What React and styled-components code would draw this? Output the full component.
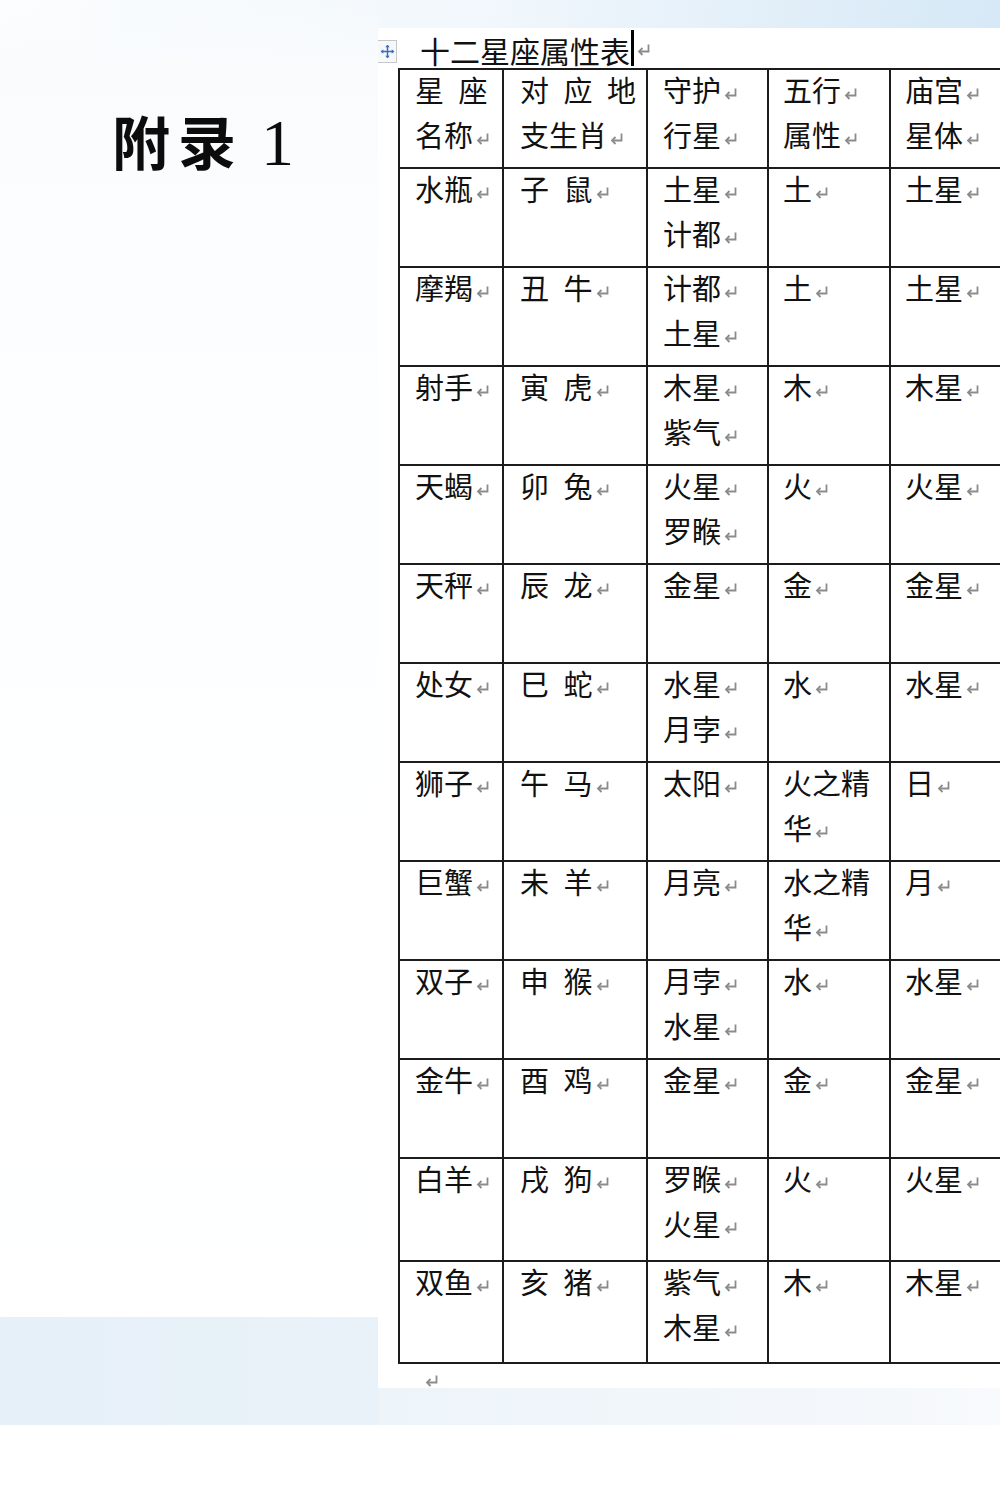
import styled, { createGlobalStyle } from 'styled-components';

const GlobalStyle = createGlobalStyle`
  body {
    margin: 0;
    background: #fff;
  }
`;

const Screen = styled.div`
  width: 1000px;
  height: 1506px;
  overflow: hidden;
  display: flex;
  flex-direction: column;
  background: #fff;
  font-family: 'Noto Sans CJK SC', 'Noto Sans', sans-serif;
  color: #111;
`;

const Stage = styled.div`
  display: flex;
  height: 1425px;
  flex-shrink: 0;
  background: linear-gradient(100deg, #fbfdfe 0%, #f1f7fc 40%, #d9eaf7 75%, #cfe4f6 100%);
`;

const Aside = styled.aside`
  width: 378px;
  flex-shrink: 0;
  display: flex;
  flex-direction: column;
`;

const AsideBody = styled.div`
  flex: 1;
  padding: 108px 0 0 112px;
  background: linear-gradient(180deg, rgba(255,255,255,0) 0px, #f9fbfd 60px, #fdfeff 400px, #ffffff 100%);
`;

const Heading = styled.h1`
  margin: 0;
  display: flex;
  align-items: baseline;
  font-weight: 700;
  font-size: 58px;
  line-height: 64px;
  letter-spacing: 8px;
  color: #0c0c0c;
`;

const HeadingNum = styled.span`
  font-family: 'Liberation Serif', serif;
  font-weight: 400;
  font-size: 66px;
  letter-spacing: 0;
  margin-left: 17px;
`;

const AsideBand = styled.div`
  height: 108px;
  background: linear-gradient(90deg, #e6f0f8, #e9f2f9);
`;

const Main = styled.main`
  flex: 1;
  min-width: 0;
  display: flex;
  flex-direction: column;
  padding-top: 28px;
`;

const Sheet = styled.div`
  position: relative;
  height: 1360px;
  background: #fff;
  overflow-x: clip;
  overflow-y: visible;
  padding-left: 20px;
`;

const MainBand = styled.div`
  flex: 1;
  background: linear-gradient(90deg, #edf4fa, #f3f7fb 70%, #f8fafc);
`;

const Handle = styled.div`
  position: absolute;
  left: 0;
  top: 12px;
  width: 18px;
  height: 21px;
  border: 1px solid #c4c8cc;
  border-left: none;
  background: #f6f8fa;
  display: flex;
  align-items: center;
  justify-content: center;
`;

const Caption = styled.div`
  height: 44px;
  line-height: 44px;
  margin-bottom: -4px;
  display: flex;
  align-items: center;
  padding-left: 22px;
  font-size: 30px;
  white-space: nowrap;
`;

const Cursor = styled.span`
  display: inline-block;
  width: 3px;
  height: 36px;
  background: #000;
  margin: 0 0 4px 1px;
`;

const Table = styled.table`
  position: relative;
  border-collapse: collapse;
  table-layout: fixed;
  width: 640px;
  font-size: 29px;
`;

const Row = styled.tr`
  height: ${({ $h }) => $h}px;
`;

const Cell = styled.td`
  border: 2px solid #1c1c1c;
  vertical-align: top;
  padding: 0 0 0 ${({ $pad }) => $pad}px;
`;

const Lines = styled.div`
  margin-top: -3px;
`;

const Line = styled.div`
  line-height: 45px;
  white-space: nowrap;
`;

const MarkSvg = styled.svg`
  display: inline-block;
  vertical-align: 1px;
  margin-left: 2px;
`;

const EndMark = styled.div`
  height: 24px;
  overflow: hidden;
  padding-left: 24px;
  display: flex;
  align-items: flex-end;
`;

const Mark = () => (
  <MarkSvg width="15" height="14" viewBox="0 0 15 14">
    <path d="M12.5 1.5 V8.5 H3" fill="none" stroke="#8c8c8c" strokeWidth="1.8" />
    <path d="M6.5 5 L3 8.5 L6.5 12" fill="none" stroke="#8c8c8c" strokeWidth="1.8" />
  </MarkSvg>
);

const MoveIcon = () => (
  <svg width="15" height="15" viewBox="0 0 16 16">
    <path d="M8 1 V15 M1 8 H15" stroke="#3b6cc0" strokeWidth="1.6" />
    <path d="M5.5 3.5 L8 1 L10.5 3.5 Z M5.5 12.5 L8 15 L10.5 12.5 Z M3.5 5.5 L1 8 L3.5 10.5 Z M12.5 5.5 L15 8 L12.5 10.5 Z" fill="#3b6cc0" />
  </svg>
);

const sp = '\u2002';

// each cell: list of lines, a line is [text, hasMark]
const p = (...texts) => texts.map((t) => [t, true]);

const header = [
  [[`星${sp}座`, false], ['名称', true]],
  [[`对${sp}应${sp}地`, false], ['支生肖', true]],
  p('守护', '行星'),
  p('五行', '属性'),
  p('庙宫', '星体'),
];

const rows = [
  [p('水瓶'), p(`子${sp}鼠`), p('土星', '计都'), p('土'), p('土星')],
  [p('摩羯'), p(`丑${sp}牛`), p('计都', '土星'), p('土'), p('土星')],
  [p('射手'), p(`寅${sp}虎`), p('木星', '紫气'), p('木'), p('木星')],
  [p('天蝎'), p(`卯${sp}兔`), p('火星', '罗睺'), p('火'), p('火星')],
  [p('天秤'), p(`辰${sp}龙`), p('金星'), p('金'), p('金星')],
  [p('处女'), p(`巳${sp}蛇`), p('水星', '月孛'), p('水'), p('水星')],
  [p('狮子'), p(`午${sp}马`), p('太阳'), [['火之精', false], ['华', true]], p('日')],
  [p('巨蟹'), p(`未${sp}羊`), p('月亮'), [['水之精', false], ['华', true]], p('月')],
  [p('双子'), p(`申${sp}猴`), p('月孛', '水星'), p('水'), p('水星')],
  [p('金牛'), p(`酉${sp}鸡`), p('金星'), p('金'), p('金星')],
  [p('白羊'), p(`戌${sp}狗`), p('罗睺', '火星'), p('火'), p('火星')],
  [p('双鱼'), p(`亥${sp}猪`), p('紫气', '木星'), p('木'), p('木星')],
];

const widths = [104, 144, 121, 122, 149];
const pads = [15, 16, 15, 14, 14];
const heights = [99, 99, 99, 99, 99, 99, 99, 99, 99, 99, 99, 103, 102];

const TableRow = ({ cells, h }) => (
  <Row $h={h}>
    {cells.map((lines, i) => (
      <Cell key={i} $pad={pads[i]}>
        <Lines>
          {lines.map(([text, mark], j) => (
            <Line key={j}>
              {text}
              {mark && <Mark />}
            </Line>
          ))}
        </Lines>
      </Cell>
    ))}
  </Row>
);

const App = () => (
  <Screen>
    <GlobalStyle />
    <Stage>
      <Aside>
        <AsideBody>
          <Heading>
            附录<HeadingNum>1</HeadingNum>
          </Heading>
        </AsideBody>
        <AsideBand />
      </Aside>
      <Main>
        <Sheet>
          <Handle>
            <MoveIcon />
          </Handle>
          <Caption>
            十二星座属性表
            <Cursor />
            <Mark />
          </Caption>
          <Table>
            <colgroup>
              {widths.map((w, i) => (
                <col key={i} style={{ width: w }} />
              ))}
            </colgroup>
            <tbody>
              <TableRow cells={header} h={heights[0]} />
              {rows.map((cells, i) => (
                <TableRow key={i} cells={cells} h={heights[i + 1]} />
              ))}
            </tbody>
          </Table>
          <EndMark>
            <Mark />
          </EndMark>
        </Sheet>
        <MainBand />
      </Main>
    </Stage>
  </Screen>
);

export default App;
